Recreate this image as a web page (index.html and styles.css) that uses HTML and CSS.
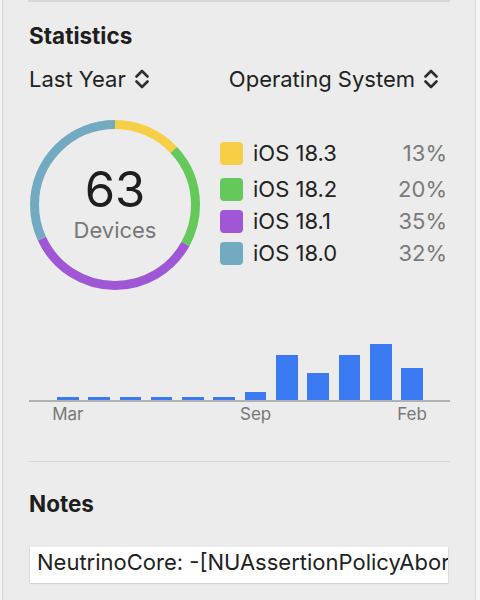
FILE: index.html
```html
<!DOCTYPE html>
<html lang="en">
<head>
    <meta charset="UTF-8">
    <meta name="viewport" content="width=device-width, initial-scale=1.0">
    <title>Statistics</title>
    <link rel="stylesheet" href="styles.css">
</head>
<body>
    <div class="panel">
        <div class="rule top-rule"></div>

        <!-- Statistics section -->
        <h2 class="section-title">Statistics</h2>
        <div class="filters">
            <span class="popup">Last Year
                <svg class="chevrons" width="14" height="22" viewBox="0 0 14 22"><path d="M1.5 8.5 L7 3 L12.5 8.5 M1.5 13.5 L7 19 L12.5 13.5" fill="none" stroke="#2e2e2e" stroke-width="2.6" stroke-linecap="round" stroke-linejoin="round"/></svg>
            </span>
            <span class="popup">Operating System
                <svg class="chevrons" width="14" height="22" viewBox="0 0 14 22"><path d="M1.5 8.5 L7 3 L12.5 8.5 M1.5 13.5 L7 19 L12.5 13.5" fill="none" stroke="#2e2e2e" stroke-width="2.6" stroke-linecap="round" stroke-linejoin="round"/></svg>
            </span>
        </div>

        <div class="summary">
            <div class="donut">
                <svg width="170" height="170" viewBox="0 0 170 170">
                    <g transform="rotate(-90 85 85)" fill="none" stroke-width="9">
                        <circle cx="85" cy="85" r="80.5" stroke="#f7cf46" stroke-dasharray="65.75 505.8" stroke-dashoffset="0"/>
                        <circle cx="85" cy="85" r="80.5" stroke="#65c85a" stroke-dasharray="101.16 505.8" stroke-dashoffset="-65.75"/>
                        <circle cx="85" cy="85" r="80.5" stroke="#a057d6" stroke-dasharray="177.03 505.8" stroke-dashoffset="-166.91"/>
                        <circle cx="85" cy="85" r="80.5" stroke="#72aac2" stroke-dasharray="161.86 505.8" stroke-dashoffset="-343.94"/>
                    </g>
                </svg>
                <div class="donut-label">
                    <span class="count">63</span>
                    <span class="unit">Devices</span>
                </div>
            </div>

            <ul class="legend">
                <li><span class="swatch yellow"></span><span class="name">iOS 18.3</span><span class="pct">13%</span></li>
                <li><span class="swatch green"></span><span class="name">iOS 18.2</span><span class="pct">20%</span></li>
                <li><span class="swatch purple"></span><span class="name">iOS 18.1</span><span class="pct">35%</span></li>
                <li><span class="swatch blue"></span><span class="name">iOS 18.0</span><span class="pct">32%</span></li>
            </ul>
        </div>

        <!-- monthly bar chart -->
        <div class="chart">
            <div class="bars">
                <div class="col"><div class="bar" style="height:3px"></div></div>
                <div class="col"><div class="bar" style="height:3px"></div></div>
                <div class="col"><div class="bar" style="height:3px"></div></div>
                <div class="col"><div class="bar" style="height:3px"></div></div>
                <div class="col"><div class="bar" style="height:3px"></div></div>
                <div class="col"><div class="bar" style="height:3px"></div></div>
                <div class="col"><div class="bar" style="height:8px"></div></div>
                <div class="col"><div class="bar" style="height:45px"></div></div>
                <div class="col"><div class="bar" style="height:27px"></div></div>
                <div class="col"><div class="bar" style="height:45px"></div></div>
                <div class="col"><div class="bar" style="height:56px"></div></div>
                <div class="col"><div class="bar" style="height:32px"></div></div>
            </div>
            <div class="axis"></div>
            <div class="months">
                <span>Mar</span><span></span><span></span><span></span><span></span><span></span>
                <span>Sep</span><span></span><span></span><span></span><span></span>
                <span>Feb</span>
            </div>
        </div>

        <div class="rule"></div>

        <!-- Notes section -->
        <h2 class="section-title notes-title">Notes</h2>
        <div class="note-field">NeutrinoCore: -[NUAssertionPolicyAbortOnError notifyAssertion:]</div>
    </div>
</body>
</html>
```

FILE: styles.css
```css
/* Inspector panel */
body {
    margin: 0;
    background-color: #f5f5f5;
    font-family: Inter, "Noto Sans", sans-serif;
    color: #222;
}
.panel {
    margin-left: 2px;
    width: 474px;
    height: 600px;
    background-color: #ebeceb;
    border-left: 1px solid #d2d3d2;
    border-right: 1px solid #dadada;
    padding: 0 26px 0 26px;
    box-sizing: border-box;
    overflow: hidden;
}
.rule {
    height: 1px;
    background-color: #d6d7d6;
    margin: 0 -1px 0 -1px;
}
.top-rule {
    height: 2px;
}
.section-title {
    font-size: 22.5px;
    font-weight: 700;
    line-height: 26px;
    margin: 21px 0 0 0;
    color: #1e1e1e;
}
.filters {
    display: flex;
    justify-content: space-between;
    margin: 17px 11px 0 0;
    font-size: 22px;
    line-height: 26px;
}
.popup {
    display: flex;
    align-items: center;
    gap: 9px;
}
.chevrons {
    display: block;
}
.summary {
    display: flex;
    align-items: flex-start;
    margin-top: 28px;
}
.donut {
    position: relative;
    width: 170px;
    height: 170px;
    margin-left: 1px;
}
.donut svg {
    display: block;
}
.donut-label {
    position: absolute;
    inset: 0;
    display: flex;
    flex-direction: column;
    align-items: center;
    padding-top: 46px;
}
.count {
    font-size: 49px;
    line-height: 48px;
    color: #1e1e1e;
}
.unit {
    font-size: 22px;
    line-height: 26px;
    color: #777;
    margin-top: 3px;
}
.legend {
    list-style: none;
    margin: 17px 2px 0 20px;
    padding: 0;
    flex: 1;
}
.legend li {
    display: flex;
    align-items: center;
    height: 32px;
    font-size: 22px;
}
.legend li:first-child {
    margin-bottom: 4px;
}
.swatch {
    width: 23px;
    height: 23px;
    border-radius: 4px;
    margin-right: 10px;
}
.yellow { background-color: #f7cf46; }
.green { background-color: #65c85a; }
.purple { background-color: #a057d6; }
.blue { background-color: #72aac2; }
.name {
    flex: 1;
    color: #222;
}
.pct {
    color: #7a7a7a;
}
.chart {
    margin-top: 50px;
}
.bars {
    display: grid;
    grid-template-columns: repeat(12, 31.3px);
    align-items: end;
    height: 60px;
    padding-left: 28px;
}
.bar {
    width: 21.6px;
    background-color: #3a7bf4;
}
.axis {
    height: 2px;
    background-color: #b1b1b1;
    margin-right: -1px;
}
.months {
    display: grid;
    grid-template-columns: repeat(12, 31.3px);
    padding-left: 28px;
    margin-top: 2px;
    font-size: 17px;
    line-height: 20px;
    color: #777;
}
.months span {
    width: 21.6px;
    display: flex;
    justify-content: center;
    white-space: nowrap;
}
.chart + .rule {
    margin-top: 37px;
}
.notes-title {
    margin-top: 29px;
}
.note-field {
    margin: 30px 1px 0 1px;
    height: 36px;
    background-color: #fff;
    box-shadow: 0 0.5px 1.5px rgba(0, 0, 0, 0.3);
    font-size: 22px;
    line-height: 30px;
    padding: 0 7px;
    white-space: nowrap;
    overflow: hidden;
    color: #222;
}
```
